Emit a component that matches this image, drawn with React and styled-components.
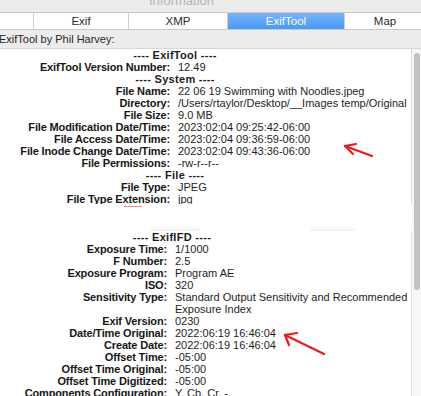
import styled, { createGlobalStyle } from "styled-components";

const Global = createGlobalStyle`
  html, body {
    margin: 0;
    padding: 0;
    background: #ececec;
    overflow: hidden;
  }
  body {
    font-family: "Liberation Sans", Arial, sans-serif;
    color: #1c1c1c;
  }
`;

const Window = styled.div`
  position: relative;
  width: 421px;
  height: 396px;
  overflow: hidden;
  display: flex;
  flex-direction: column;
`;

const TitleBar = styled.div`
  height: 12px;
  flex: none;
  overflow: hidden;
  text-align: center;
  padding-right: 60px;
`;

const Title = styled.div`
  margin-top: -7px;
  font-size: 13px;
  line-height: 16px;
  color: #b4b4b4;
  padding-left: 2px;
`;

const Tabs = styled.div`
  display: flex;
  flex: none;
  height: 16px;
  background: #fff;
  border-top: 1px solid #c9c9c9;
  border-bottom: 1px solid #c9c9c9;
`;

const Tab = styled.div`
  width: ${(p) => p.$w}px;
  flex: none;
  display: flex;
  align-items: center;
  justify-content: center;
  font-size: 11.5px;
  color: ${(p) => (p.$active ? "#fff" : "#2a2a2a")};
  background: ${(p) =>
    p.$active ? "linear-gradient(#74b6fb, #4a98f7)" : "#fff"};
  border-right: 1px solid #cfcfcf;
  &:last-child {
    border-right: none;
  }
`;

const Caption = styled.div`
  flex: none;
  height: 18px;
  line-height: 19px;
  font-size: 11px;
  color: #262626;
  margin-left: -1px;
  border-bottom: 1px solid #d6d6d6;
`;

const Body = styled.div`
  flex: 1;
  display: flex;
  min-height: 0;
`;

const Sheet = styled.div`
  flex: 1;
  background: #fff;
  display: flex;
  flex-direction: column;
  min-height: 0;
`;

const Shot = styled.div`
  flex: none;
  height: ${(p) => p.$h}px;
  overflow: hidden;
  border-right: 1px solid ${(p) => p.$edge};
`;

const Table = styled.div`
  display: grid;
  grid-template-columns: ${(p) => p.$label}px 1fr;
  column-gap: 8px;
  font-size: 11px;
  line-height: 12px;
`;

const Header = styled.div`
  grid-column: 1 / -1;
  width: ${(p) => p.$center * 2}px;
  text-align: center;
  font-weight: bold;
  letter-spacing: 0.3px;
`;

const Label = styled.div`
  text-align: right;
  font-weight: bold;
  white-space: nowrap;
  letter-spacing: -0.15px;
  color: #161616;
`;

const Value = styled.div`
  white-space: pre;
  color: #1e1e1e;
`;

const Seam = styled.div`
  flex: none;
  height: 27px;
  display: flex;
  align-items: flex-end;
  position: relative;
`;

const Squiggle = styled.div`
  position: absolute;
  left: 124px;
  top: 2px;
  width: 18px;
  height: 1px;
  background: #f08a8a;
`;

const Shade = styled.div`
  height: 5px;
  width: ${(p) => p.$w}px;
  margin-left: ${(p) => p.$x}px;
  background: linear-gradient(rgba(0, 0, 0, 0), rgba(0, 0, 0, 0.06));
  border-radius: 6px 6px 0 0;
`;

const Track = styled.div`
  width: 9px;
  flex: none;
  background: #f7f7f7;
  padding-top: 4px;
  display: flex;
  justify-content: flex-end;
`;

const Thumb = styled.div`
  width: 6px;
  height: 237px;
  border-radius: 3px;
  background: #c2c2c2;
  margin-right: 1px;
`;

const Arrow = styled.svg`
  position: absolute;
  overflow: visible;
`;

const system = [
  ["ExifTool", [["ExifTool Version Number", "12.49"]]],
  [
    "System",
    [
      ["File Name", "22 06 19 Swimming with Noodles.jpeg"],
      ["Directory", "/Users/rtaylor/Desktop/__Images temp/Original"],
      ["File Size", "9.0 MB"],
      ["File Modification Date/Time", "2023:02:04 09:25:42-06:00"],
      ["File Access Date/Time", "2023:02:04 09:36:59-06:00"],
      ["File Inode Change Date/Time", "2023:02:04 09:43:36-06:00"],
      ["File Permissions", "-rw-r--r--"],
    ],
  ],
  [
    "File",
    [
      ["File Type", "JPEG"],
      ["File Type Extension", "jpg"],
    ],
  ],
];

const exif = [
  [
    "ExifIFD",
    [
      ["Exposure Time", "1/1000"],
      ["F Number", "2.5"],
      ["Exposure Program", "Program AE"],
      ["ISO", "320"],
      ["Sensitivity Type", "Standard Output Sensitivity and Recommended\nExposure Index"],
      ["Exif Version", "0230"],
      ["Date/Time Original", "2022:06:19 16:46:04"],
      ["Create Date", "2022:06:19 16:46:04"],
      ["Offset Time", "-05:00"],
      ["Offset Time Original", "-05:00"],
      ["Offset Time Digitized", "-05:00"],
      ["Components Configuration", "Y, Cb, Cr, -"],
    ],
  ],
];

const Groups = ({ groups, label, center }) => (
  <Table $label={label}>
    {groups.map(([name, rows]) => [
      <Header key={name} $center={center}>
        ---- {name} ----
      </Header>,
      ...rows.flatMap(([k, v]) => [
        <Label key={k + "l"}>{k}:</Label>,
        <Value key={k + "v"}>{v}</Value>,
      ]),
    ])}
  </Table>
);

const App = () => {
  return (
    <Window>
      <Global />
      <TitleBar>
        <Title>Information</Title>
      </TitleBar>
      <Tabs>
        <Tab $w={33} />
        <Tab $w={94}>Exif</Tab>
        <Tab $w={98}>XMP</Tab>
        <Tab $w={116} $active>
          ExifTool
        </Tab>
        <Tab $w={80}>Map</Tab>
      </Tabs>
      <Caption>ExifTool by Phil Harvey:</Caption>
      <Body>
        <Sheet>
          <Shot $h={155} $edge="#dcdcdc">
            <Groups groups={system} label={170} center={175} />
          </Shot>
          <Seam>
            <Squiggle />
            <Shade $x={150} $w={50} />
            <Shade $x={110} $w={46} />
          </Seam>
          <Shot $h={200} $edge="#e2e2e2">
            <Groups groups={exif} label={167} center={172} />
          </Shot>
        </Sheet>
        <Track>
          <Thumb />
        </Track>
      </Body>
      <Arrow style={{ left: 344, top: 143 }} width="30" height="15">
        <g stroke="#f0181c" strokeWidth="2.2" strokeLinecap="round" fill="none">
          <path d="M1 3 L28 13" />
          <path d="M1 3 L12 1" />
          <path d="M1 3 L9 11" />
        </g>
      </Arrow>
      <Arrow style={{ left: 284, top: 332 }} width="42" height="24">
        <g stroke="#f0181c" strokeWidth="2.2" strokeLinecap="round" fill="none">
          <path d="M1 3 L40 22" />
          <path d="M1 3 L13 1" />
          <path d="M1 3 L5 13" />
        </g>
      </Arrow>
    </Window>
  );
};

export default App;
